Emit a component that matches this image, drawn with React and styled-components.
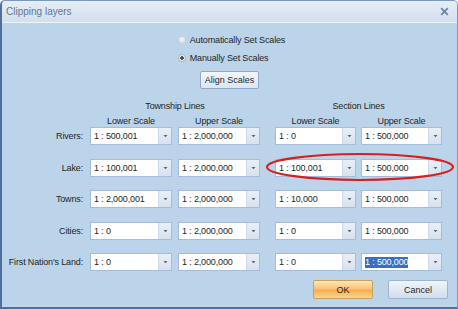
import React from 'react';
import styled, { createGlobalStyle } from 'styled-components';

const GlobalStyle = createGlobalStyle`
  html, body {
    margin: 0;
    padding: 0;
    background: #ffffff;
  }
  body {
    font-family: "Liberation Sans", Arial, sans-serif;
  }
`;

const Dialog = styled.div`
  position: relative;
  width: 458px;
  height: 309px;
  box-sizing: border-box;
  background: #bcd4ea;
  border: 1px solid #7d98c0;
  border-left: 2px solid #4f6f9f;
  border-bottom: 2px solid #4f6f9f;
  border-radius: 5px 5px 0 0;
  display: flex;
  flex-direction: column;
  overflow: hidden;
  font-size: 9px;
  letter-spacing: -0.15px;
  color: #1f1f1f;
`;

const TitleBar = styled.div`
  height: 21px;
  flex: none;
  display: flex;
  align-items: center;
  justify-content: space-between;
  padding: 0 8px 0 4px;
  background: linear-gradient(#e6edf6, #d3dfee);
  border-bottom: 1px solid #eef3f9;
`;

const Title = styled.span`
  font-size: 10px;
  letter-spacing: 0;
  color: #617590;
`;

const Body = styled.div`
  flex: 1;
  display: flex;
  flex-direction: column;
  padding-top: 10px;
`;

const RadioGroup = styled.div`
  align-self: center;
  display: flex;
  flex-direction: column;
  gap: 3.5px;
  margin-left: 4px;
`;

const RadioRow = styled.label`
  height: 14px;
  display: flex;
  align-items: center;
  gap: 4px;
`;

const RadioDot = styled.span`
  width: 8px;
  height: 8px;
  box-sizing: border-box;
  border-radius: 50%;
  border: 1px solid ${p => (p.$checked ? '#a9b3bf' : '#c9d0d8')};
  background: ${p =>
    p.$checked
      ? 'radial-gradient(circle, #3f4852 0 1.5px, #eef1f4 2px)'
      : 'linear-gradient(#f3f5f7, #dfe4ea)'};
`;

const AlignButton = styled.button`
  align-self: center;
  margin: 6.5px 0 0 0;
  width: 59px;
  height: 18px;
  padding: 0;
  font: inherit;
  color: #1f1f1f;
  border: 1px solid #90a8c9;
  border-radius: 2px;
  background: linear-gradient(#f2f6fb, #dce6f2);
`;

const Row = styled.div`
  display: flex;
  align-items: center;
  margin-top: ${p => p.$top || 0}px;
  height: ${p => p.$height || 18}px;
`;

const RowLabel = styled.div`
  width: 81px;
  margin-right: 7px;
  text-align: right;
  white-space: nowrap;
`;

const Group = styled.div`
  display: flex;
  gap: ${p => (p.$section ? 5 : 6)}px;
  margin-left: ${p => (p.$section ? 15 : 0)}px;
  width: ${p => (p.$section ? 167 : 170)}px;
  justify-content: ${p => (p.$center ? 'center' : 'flex-start')};
`;

const HeadCell = styled.div`
  width: ${p => p.$w}px;
  text-align: center;
  white-space: nowrap;
`;

const Combo = styled.div`
  width: ${p => p.$w}px;
  height: 18px;
  box-sizing: border-box;
  display: flex;
  background: #ffffff;
  border: 1px solid #a5bcdb;
`;

const ComboText = styled.div`
  flex: 1;
  display: flex;
  align-items: center;
  padding-left: 3px;
  white-space: nowrap;
`;

const Selected = styled.span`
  background: #3470c4;
  color: #ffffff;
  line-height: 11px;
`;

const DropButton = styled.div`
  width: 12px;
  display: flex;
  align-items: center;
  justify-content: center;
  background: linear-gradient(#e9eff7, #d7e2ef);
  border-left: 1px solid #ccd9ea;
`;

const Footer = styled.div`
  display: flex;
  justify-content: flex-end;
  gap: 15px;
  margin-top: 9px;
  padding-right: 9px;
`;

const DialogButton = styled.button`
  width: 60px;
  height: 19px;
  padding: 0;
  font: inherit;
  color: #1f1f1f;
  border-radius: 2px;
  border: 1px solid ${p => (p.$primary ? '#c6a062' : '#9fb4cf')};
  background: ${p =>
    p.$primary
      ? 'linear-gradient(#fde7b6 0%, #f9c47a 45%, #f6ad4f 55%, #fbd68a 100%)'
      : 'linear-gradient(#eff4fa 0%, #e1e9f3 50%, #d2deec 100%)'};
`;

const Highlight = styled.svg`
  position: absolute;
  left: 262px;
  top: 151px;
  pointer-events: none;
`;

const Arrow = () => (
  <svg width="5" height="4" viewBox="0 0 5 4">
    <path d="M0.5 1 H4.5 L2.5 3.2 Z" fill="#56667c" />
  </svg>
);

const CloseIcon = () => (
  <svg width="9" height="9" viewBox="0 0 9 9">
    <path d="M1.2 1.2 L7.8 7.8 M7.8 1.2 L1.2 7.8" stroke="#7084a3" strokeWidth="1.8" />
  </svg>
);

const ScaleBox = ({ value, w, selected }) => (
  <Combo $w={w}>
    <ComboText>{selected ? <Selected>{value}</Selected> : value}</ComboText>
    <DropButton>
      <Arrow />
    </DropButton>
  </Combo>
);

const rows = [
  { label: 'Rivers:', values: ['1 : 500,001', '1 : 2,000,000', '1 : 0', '1 : 500,000'] },
  { label: 'Lake:', values: ['1 : 100,001', '1 : 2,000,000', '1 : 100,001', '1 : 500,000'] },
  { label: 'Towns:', values: ['1 : 2,000,001', '1 : 2,000,000', '1 : 10,000', '1 : 500,000'] },
  { label: 'Cities:', values: ['1 : 0', '1 : 2,000,000', '1 : 0', '1 : 500,000'] },
  { label: "First Nation's Land:", values: ['1 : 0', '1 : 2,000,000', '1 : 0', '1 : 500,000'], selectLast: true },
];

export default function App() {
  return (
    <>
      <GlobalStyle />
      <Dialog>
        <TitleBar>
          <Title>Clipping layers</Title>
          <CloseIcon />
        </TitleBar>
        <Body>
          <RadioGroup>
            <RadioRow>
              <RadioDot />
              Automatically Set Scales
            </RadioRow>
            <RadioRow>
              <RadioDot $checked />
              Manually Set Scales
            </RadioRow>
          </RadioGroup>
          <AlignButton>Align Scales</AlignButton>

          <Row $top={11} $height={12}>
            <RowLabel />
            <Group $center>
              <HeadCell $w={170}>Township Lines</HeadCell>
            </Group>
            <Group $section $center>
              <HeadCell $w={167}>Section Lines</HeadCell>
            </Group>
          </Row>
          <Row $top={2.5} $height={12}>
            <RowLabel />
            <Group>
              <HeadCell $w={82}>Lower Scale</HeadCell>
              <HeadCell $w={82}>Upper Scale</HeadCell>
            </Group>
            <Group $section>
              <HeadCell $w={81}>Lower Scale</HeadCell>
              <HeadCell $w={81}>Upper Scale</HeadCell>
            </Group>
          </Row>

          {rows.map((r, i) => (
            <Row key={r.label} $top={i === 0 ? 0.5 : 13.5}>
              <RowLabel>{r.label}</RowLabel>
              <Group>
                <ScaleBox w={82} value={r.values[0]} />
                <ScaleBox w={82} value={r.values[1]} />
              </Group>
              <Group $section>
                <ScaleBox w={81} value={r.values[2]} />
                <ScaleBox w={81} value={r.values[3]} selected={r.selectLast} />
              </Group>
            </Row>
          ))}

          <Footer>
            <DialogButton $primary>OK</DialogButton>
            <DialogButton>Cancel</DialogButton>
          </Footer>
        </Body>
        <Highlight width="192" height="31" viewBox="0 0 192 31">
          <ellipse cx="96" cy="15" rx="93" ry="13" fill="none" stroke="#d61f1f" strokeWidth="2.2" />
        </Highlight>
      </Dialog>
    </>
  );
}
